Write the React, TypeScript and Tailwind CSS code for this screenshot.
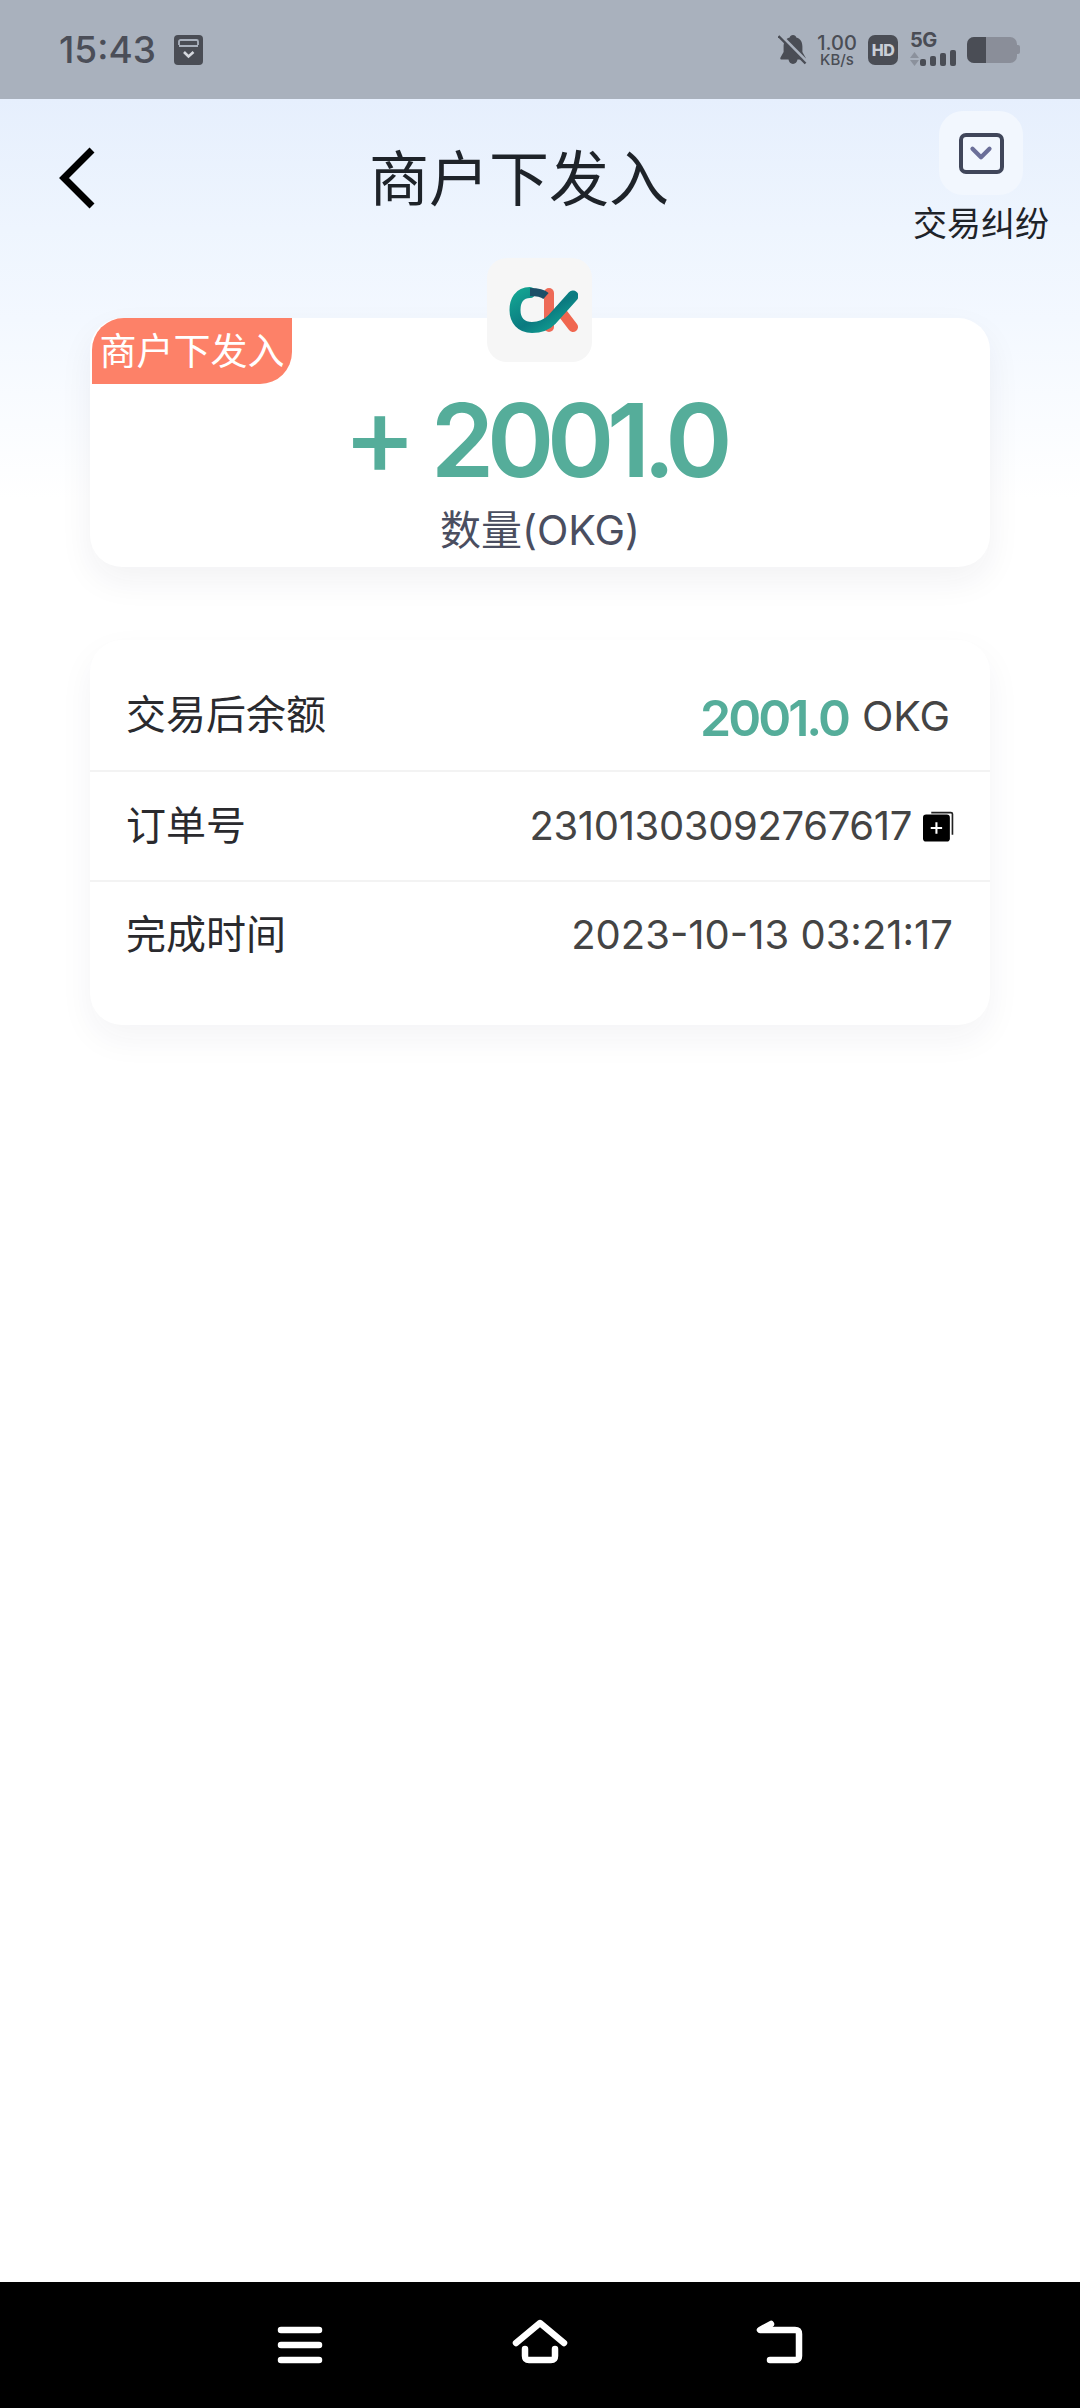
import { ChevronDown } from "lucide-react";

const FONT = "font-['Inter','Noto_Sans_CJK_SC',sans-serif]";

function BellOffIcon() {
  return (
    <svg width="30" height="32" viewBox="0 0 30 32" fill="none">
      <path
        d="M15 1c-1.800 0-3 1.200-3.300 2.600C7.400 4.800 5.600 8.400 5.600 12.500v5.500L2.500 23.400c-.6 1 0 2.100 1.200 2.100h6.800c.4 2.600 2.100 4.400 4.500 4.400s4.100-1.800 4.500-4.400h6.800c1.200 0 1.800-1.100 1.200-2.100L24.400 18v-5.500c0-4.100-1.800-7.700-6.100-8.900C18 2.200 16.800 1 15 1z"
        fill="#4a4d55"
      />
      <path d="M3 1.500 30 28.500" stroke="#a9b1bd" strokeWidth="3" />
      <path d="M0.500 2 27.500 29.500" stroke="#4a4d55" strokeWidth="2.400" />
    </svg>
  );
}

function SignalIcon() {
  return (
    <div className="flex flex-col">
      <span className="text-[20px] leading-[15px] font-bold tracking-[-0.5px] text-[#4a4d55]">5G</span>
      <div className="mt-[2px] flex items-end">
        <svg width="9" height="14" viewBox="0 0 9 14">
          <path d="M4.500 0 9 6H0z" fill="#8b919c" />
          <path d="M4.500 14 0 8h9z" fill="#8b919c" />
        </svg>
        <div className="ml-[1px] flex items-end gap-[4px]">
          {[7, 10, 13, 16].map((h) => (
            <span key={h} className="w-[6px] rounded-[2px] bg-[#4a4d55]" style={{ height: h }} />
          ))}
        </div>
      </div>
    </div>
  );
}

function BatteryIcon() {
  return (
    <div className="flex items-center">
      <div className="flex h-[26px] w-[50px] overflow-hidden rounded-[7px] bg-[#8a8e99]">
        <div className="w-[19px] bg-[#4a4d55]" />
      </div>
      <div className="h-[9px] w-[3px] rounded-r-[2px] bg-[#8a8e99]" />
    </div>
  );
}

function StatusBar() {
  return (
    <div className="flex h-[99px] shrink-0 items-center justify-between bg-[#a9b1bd] pr-[60px] pl-[59px]">
      <div className="flex items-center gap-[18px]">
        <span className="text-[37px] leading-none font-medium text-[#4b4e58]">15:43</span>
        <svg width="30" height="30" viewBox="0 0 30 30">
          <rect width="29" height="30" rx="4" fill="#4a4d55" />
          <path d="M5 10V6.500C5 5.500 5.800 5 6.500 5h16c.8 0 1.500.5 1.500 1.500V10" fill="none" stroke="#a9b1bd" strokeWidth="1.800" />
          <rect x="5" y="10" width="19" height="2" fill="#a9b1bd" />
          <path d="m10 17 4.500 4.500L19.500 17" fill="none" stroke="#d5d8de" strokeWidth="2.600" />
        </svg>
      </div>
      <div className="flex items-center">
        <BellOffIcon />
        <div className="ml-[10px] flex w-[38px] flex-col items-center text-[#4a4d55]">
          <span className="text-[20px] leading-[20px] font-medium">1.00</span>
          <span className="text-[15px] leading-[14px] font-medium">KB/s</span>
        </div>
        <div className="ml-[12px] flex h-[30px] w-[30px] items-center justify-center rounded-[7px] bg-[#4a4d55] text-[16px] font-extrabold tracking-[-0.5px] text-[#c9ced6]">
          HD
        </div>
        <div className="ml-[12px]">
          <SignalIcon />
        </div>
        <div className="ml-[11px]">
          <BatteryIcon />
        </div>
      </div>
    </div>
  );
}

function OkLogo() {
  return (
    <svg width="70" height="46" viewBox="0 0 70 46" fill="none" className="ml-[6px]">
      <defs>
        <linearGradient id="okTeal" x1="0" y1="0" x2="1" y2="1">
          <stop offset="0" stopColor="#13a392" />
          <stop offset="0.55" stopColor="#0a7a80" />
          <stop offset="1" stopColor="#14ab98" />
        </linearGradient>
      </defs>
      {/* coral stem and leg of the K */}
      <path d="M41 6v34" stroke="#ee6a57" strokeWidth="10" strokeLinecap="round" />
      <path d="M52 23 65 40" stroke="#f0664f" strokeWidth="10" strokeLinecap="round" />
      {/* teal loop running into the K's arm */}
      <path
        d="M22 5.500C11 5.500 7 14 7 23c0 10 6 17.500 17 17.500 9 0 15-3 20-8L65 9"
        stroke="url(#okTeal)"
        strokeWidth="11"
        strokeLinecap="round"
      />
      <path d="M22 5c6 0 12 .5 16 4" stroke="#1d4f68" strokeWidth="8" />
    </svg>
  );
}

function CopyIcon() {
  return (
    <svg width="31" height="31" viewBox="0 0 30 30" className="ml-[11px]">
      <path d="M8 1.500h19c1 0 1.500.5 1.500 1.500v20" fill="none" stroke="#222" strokeWidth="1.600" />
      <rect x="0" y="3.500" width="26" height="26" rx="3" fill="#000" />
      <path d="M13 11v11M7.500 16.500h11" stroke="#fff" strokeWidth="2" />
    </svg>
  );
}

function NavBar() {
  return (
    <div className="flex h-[126px] shrink-0 bg-black pt-[34px] pl-[274px]">
      <svg width="52" height="58" viewBox="0 0 52 58" fill="none" stroke="#fff" strokeWidth="6.500" strokeLinecap="round">
        <path d="M7 14h38M7 29h38M7 44h38" />
      </svg>
      <svg width="66" height="58" viewBox="0 0 66 58" className="ml-[181px]" fill="none" stroke="#fff" strokeWidth="6.500" strokeLinecap="round" strokeLinejoin="round">
        <path d="M9 27 33 7l24 20" />
        <path d="M18 33v7c0 3 1 4 4 4h22c3 0 4-1 4-4v-7" />
      </svg>
      <svg width="60" height="58" viewBox="0 0 60 58" className="ml-[177px]" fill="none" stroke="#fff" strokeWidth="6.500" strokeLinecap="round" strokeLinejoin="round">
        <path d="M21 8 10 14h35c3 0 4 1 4 4v22c0 3-1 4-4 4H20" />
      </svg>
    </div>
  );
}

export default function App() {
  return (
    <div className={`flex h-[2408px] w-[1080px] flex-col overflow-hidden bg-white ${FONT}`}>
      <StatusBar />

      <div className="flex-1 bg-[linear-gradient(180deg,#e6effd_0px,#eef5fe_130px,#f3f8ff_220px,#ffffff_400px)]">
        {/* Header */}
        <div className="flex h-[159px] items-start pt-[12px]">
          <button type="button" className="mt-[36px] ml-[58px] shrink-0">
            <svg width="38" height="62" viewBox="0 0 38 62" fill="none" className="block">
              <path d="M34 3 6 31l28 28" stroke="#000" strokeWidth="7" />
            </svg>
          </button>
          <h1 className="mt-[33px] ml-[273px] w-[300px] text-[60px] leading-[70px] font-normal whitespace-nowrap text-[#1e2329]">
            商户下发入
          </h1>
          <div className="ml-[245px] flex w-[134px] flex-col items-center">
            <div className="flex h-[84px] w-[84px] items-center justify-center rounded-[24px] bg-[#f2f7fe]">
              <div className="flex h-[41px] w-[45px] items-center justify-center rounded-[7px] border-[4px] border-[#40465a]">
                <ChevronDown size={34} strokeWidth={3} className="text-[#6b6f99]" />
              </div>
            </div>
            <span className="mt-[9px] text-[34px] leading-[40px] whitespace-nowrap text-[#1e2329]">交易纠纷</span>
          </div>
        </div>

        {/* Amount card */}
        <div className="relative mx-[90px] mt-[60px] h-[249px] rounded-[32px] bg-white shadow-[0_14px_34px_rgba(30,40,70,0.06)]">
          <div className="absolute top-0 left-[2px] flex h-[66px] w-[200px] items-center justify-center rounded-tl-[32px] rounded-br-[32px] bg-[#fd8168] text-[37px] leading-none whitespace-nowrap text-white">
            商户下发入
          </div>
          <div className="absolute top-[-60px] left-[397px] flex h-[104px] w-[105px] items-center justify-center rounded-[20px] bg-[#f6f6f6]">
            <OkLogo />
          </div>
          <div className="flex flex-col items-center pt-[62px]">
            <div className="mr-[12px] flex items-center text-[102px] leading-[120px] font-semibold whitespace-nowrap text-[#55ad9a]">
              <span className="mb-[10px] text-[111px] leading-[110px] font-medium">+</span>
              <span className="ml-[14px] tracking-[-7.300px]">2001.0</span>
            </div>
            <div className="mt-[4px] text-[41px] leading-[52px] text-[#4a4e60]">数量(OKG)</div>
          </div>
        </div>

        {/* Detail rows */}
        <div className="mx-[90px] mt-[73px] rounded-[32px] bg-white pt-[22px] pb-[35px] text-[40px] shadow-[0_14px_34px_rgba(30,40,70,0.05)]">
          <div className="flex h-[110px] items-center justify-between border-b-2 border-[#f3f3f3] pr-[40px] pl-[36px]">
            <span className="mt-[-2px] text-[#2a2a2e]">交易后余额</span>
            <span className="flex items-center text-[#444]">
              <span className="mt-[4px] text-[50px] leading-none font-semibold tracking-[-3px] text-[#55ad9a]">2001.0</span>
              <span className="ml-[14px] text-[41px] leading-none">OKG</span>
            </span>
          </div>
          <div className="flex h-[110px] items-center justify-between border-b-2 border-[#f3f3f3] pr-[36px] pl-[36px]">
            <span className="text-[#2a2a2e]">订单号</span>
            <span className="flex items-center tracking-[-0.35px] text-[#444]">
              23101303092767617
              <CopyIcon />
            </span>
          </div>
          <div className="flex h-[108px] items-center justify-between pr-[37px] pl-[36px]">
            <span className="mt-[-2px] text-[#2a2a2e]">完成时间</span>
            <span className="mt-[-2px] text-[#444]">2023-10-13 03:21:17</span>
          </div>
        </div>
      </div>

      <NavBar />
    </div>
  );
}
